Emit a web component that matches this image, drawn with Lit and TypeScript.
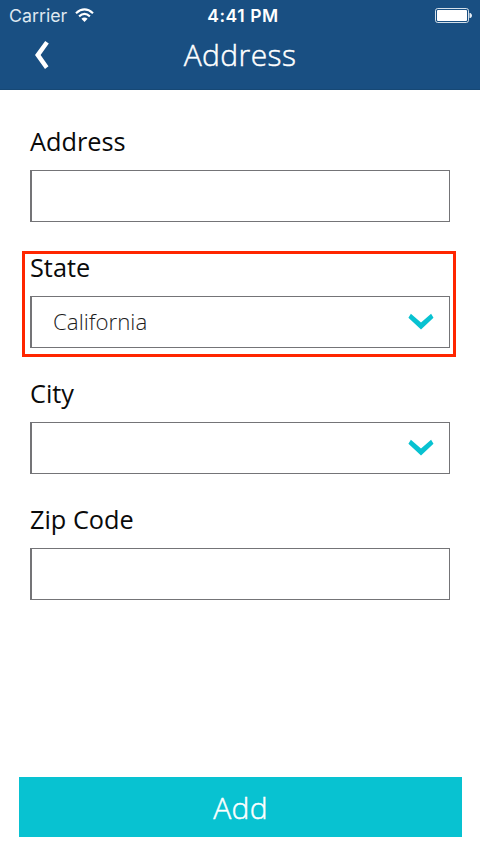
import { LitElement, html, css } from "lit";
import { customElement, property } from "lit/decorators.js";

@customElement("form-field")
class FormField extends LitElement {
  @property() label = "";
  @property() value = "";
  @property({ type: Boolean }) select = false;
  @property({ type: Boolean, reflect: true }) highlighted = false;

  static styles = css`
    :host { display: block; position: relative; height: 106px; }
    .label {
      height: 44px;
      font: 400 25.3px/30px "Open Sans", "Noto Sans", sans-serif;
      color: #0a0a0a;
      white-space: nowrap;
    }
    .box {
      box-sizing: border-box;
      height: 52px;
      border: 1px solid #747477;
      border-left-width: 2px;
      padding: 0 15px 2px 21px;
      display: flex;
      align-items: center;
      justify-content: space-between;
      background: #fff;
    }
    .value { padding-top: 2px; font: 300 22.3px/32px "Open Sans", "Noto Sans", sans-serif; color: #1c1c1c; }
    .arrow { display: block; width: 26px; height: 17px; }
    .outline {
      position: absolute;
      box-sizing: border-box;
      left: -8px; right: -6px; top: -1px; height: 106px;
      border: 3px solid #ff2600;
      pointer-events: none;
    }
  `;

  render() {
    return html`
      <div class="label">${this.label}</div>
      <div class="box">
        <span class="value">${this.value}</span>
        ${this.select
          ? html`<svg class="arrow" viewBox="0 0 26 17">
              <path fill="#08c2d1" d="M2.9.7 13 9.5 23.1.7 25.5 4.7 13 16.6.4 4.7Z" />
            </svg>`
          : null}
      </div>
      ${this.highlighted ? html`<div class="outline"></div>` : null}
    `;
  }
}

@customElement("app-root")
class AppRoot extends LitElement {
  static styles = css`
    :host {
      display: flex;
      flex-direction: column;
      box-sizing: border-box;
      height: 852px;
      background: #fff;
      overflow: hidden;
    }
    header {
      box-sizing: border-box;
      height: 90px;
      background: #194f82;
      border-bottom: 1px solid #164875;
      color: #fff;
    }
    .status {
      height: 30px;
      display: grid;
      grid-template-columns: 1fr auto 1fr;
      align-items: center;
      padding: 0 8px 0 9px;
      font: 400 17.8px/30px Inter, "Liberation Sans", sans-serif;
    }
    .carrier { display: flex; align-items: center; gap: 8px; color: #dfe8f0; }
    .carrier span, .time { padding-top: 1px; line-height: 29px; }
    .time { font-weight: 600; font-size: 17.5px; letter-spacing: 0.55px; padding-left: 5px; }
    .battery { justify-self: end; display: block; }
    .bar {
      height: 50px;
      display: grid;
      grid-template-columns: 60px 1fr 60px;
      align-items: center;
    }
    .back { display: block; margin-left: 34px; }
    .title, .add { -webkit-text-stroke: 0.45px #fff; }
    .title { text-align: center; font: 300 30px/50px "Open Sans", "Noto Sans", sans-serif; letter-spacing: 0.4px; }
    main {
      flex: 1;
      display: flex;
      flex-direction: column;
      gap: 20px;
      padding: 36px 30px 0;
    }
    .add {
      flex: none;
      height: 60px;
      margin: 0 18px 15px 19px;
      border: 0;
      padding: 1px 0 0;
      background: #08c2d1;
      color: #fff;
      font: 300 30px/59px "Open Sans", "Noto Sans", sans-serif;
      letter-spacing: 0.3px;
    }
  `;

  render() {
    return html`
      <header>
        <div class="status">
          <div class="carrier">
            <span>Carrier</span>
            <svg width="19" height="15" viewBox="0 0 19 15" fill="none" stroke="#fff" stroke-width="2.2">
              <path d="M1 5.2Q9.500-2.300 18 5.200" />
              <path d="M4.100 8.300Q9.500 3.600 14.900 8.300" />
              <path fill="#fff" stroke="none" d="M6.400 10.700Q9.500 8.200 12.600 10.700L9.500 14Z" />
            </svg>
          </div>
          <div class="time">4:41 PM</div>
          <svg class="battery" width="37" height="15" viewBox="0 0 37 15">
            <rect x=".5" y=".5" width="33" height="14" rx="2.200" fill="none" stroke="#d5e0ea" />
            <rect x="2" y="2" width="30" height="11" rx="1" fill="#fff" />
            <path d="M34.500 5h1q1.500 1 1.500 2.500t-1.500 2.500h-1z" fill="#e6edf3" />
          </svg>
        </div>
        <div class="bar">
          <svg class="back" width="16" height="30" viewBox="0 0 16 30">
            <path fill="#fff" d="M11.200 1 14.800 3.500 6.600 15 14.500 26.300 11 29 1 15Z" />
          </svg>
          <div class="title">Address</div>
        </div>
      </header>
      <main>
        <form-field label="Address"></form-field>
        <form-field label="State" value="California" select highlighted></form-field>
        <form-field label="City" select></form-field>
        <form-field label="Zip Code"></form-field>
      </main>
      <button class="add">Add</button>
    `;
  }
}
